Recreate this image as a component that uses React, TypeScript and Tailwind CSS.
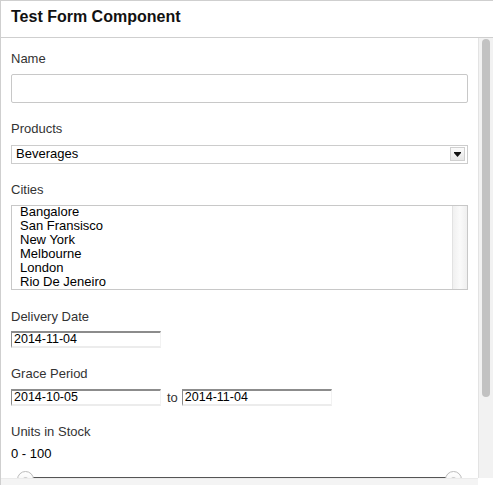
import React from "react";

const cities = [
  "Bangalore",
  "San Fransisco",
  "New York",
  "Melbourne",
  "London",
  "Rio De Jeneiro",
];

function DateBox({ value }: { value: string }) {
  return (
    <div className="w-[150px] h-[17px] border-t-2 border-l border-b-2 border-r border-t-[#8c8c8c] border-l-[#8c8c8c] border-b-[#ececec] border-r-[#f2f2f2] bg-white pl-[2px] text-[12.5px] leading-[12px] text-black">
      {value}
    </div>
  );
}

function Label({ children, className = "" }: { children: React.ReactNode; className?: string }) {
  return <div className={`text-[13px] leading-[15px] text-[#333] ${className}`}>{children}</div>;
}

export default function App() {
  return (
    <div className="w-[493px] h-[485px] overflow-hidden bg-white font-['Liberation_Sans',Arial,sans-serif]">
      <div className="w-[520px] h-[500px] border-l border-t border-[#cfcfcf] flex flex-col">
        <div className="h-[37px] shrink-0 border-b border-[#cfcfcf] px-[10px] pt-[7px]">
          <div className="text-[16px] leading-[18px] font-bold text-[#111]">Test Form Component</div>
        </div>
        <div className="flex h-[440px] shrink-0">
          <div className="w-[477px] h-[440px] overflow-hidden px-[10px] pt-[13px]">
            <Label>Name</Label>
            <div className="mt-[8px] h-[29px] border border-[#c8c8c8] rounded-[2px] bg-white" />

            <Label className="mt-[18px]">Products</Label>
            <div className="relative mt-[9px] h-[19px] border border-[#cccccc] bg-white pl-[4px] text-[13px] leading-[15px] text-black">
              Beverages
              <div className="absolute right-[2px] top-[1px] w-[15px] h-[14px] border border-[#d0d0d0] bg-gradient-to-b from-[#fbfbfb] to-[#e6e6e6] flex items-center justify-center">
                <svg width="9" height="7" viewBox="0 0 9 7">
                  <rect x="1" y="1" width="7" height="1" fill="#111" />
                  <polygon points="1,2 8,2 4.5,6" fill="#111" />
                </svg>
              </div>
            </div>

            <Label className="mt-[18px]">Cities</Label>
            <div className="mt-[8px] h-[85px] border border-[#c8c8c8] bg-white flex overflow-hidden">
              <div className="flex-1 pl-[8px] -mt-[1px] text-[13px] leading-[14px] text-black">
                {cities.map((c) => (
                  <div key={c}>{c}</div>
                ))}
              </div>
              <div className="w-[15px] border-l border-[#e2e2e2] bg-gradient-to-r from-[#f0f0f0] via-[#fafafa] to-[#efefef]" />
            </div>

            <Label className="mt-[19px]">Delivery Date</Label>
            <div className="mt-[7px]">
              <DateBox value="2014-11-04" />
            </div>

            <Label className="mt-[18px]">Grace Period</Label>
            <div className="mt-[8px] flex items-start">
              <DateBox value="2014-10-05" />
              <span className="ml-[6px] mr-[4px] text-[13px] leading-[17px] text-[#333]">to</span>
              <DateBox value="2014-11-04" />
            </div>

            <Label className="mt-[18px]">Units in Stock</Label>
            <div className="mt-[7px] text-[13px] leading-[15px] text-black">0 - 100</div>

            <div className="relative mt-[10px] mx-[6px] h-[18px]">
              <div className="absolute left-[16px] right-[16px] top-[6px] h-[1px] bg-[#555]" />
              <div className="absolute left-0 top-0 w-[17px] h-[17px] rounded-full border border-[#bbb] bg-gradient-to-b from-white to-[#eee] flex items-center justify-center">
                <div className="w-[5px] h-[5px] rounded-full bg-[#ccc]" />
              </div>
              <div className="absolute right-0 top-0 w-[17px] h-[17px] rounded-full border border-[#bbb] bg-gradient-to-b from-white to-[#eee] flex items-center justify-center">
                <div className="w-[5px] h-[5px] rounded-full bg-[#ccc]" />
              </div>
            </div>
          </div>
          <div className="w-[15px] h-[440px] border-l border-[#e3e3e3] bg-[#f2f2f2] pl-[3px] pt-[1px]">
            <div className="w-[8px] h-[358px] rounded-full bg-[#c2c2c2]" />
          </div>
        </div>
        <div className="flex h-[15px] shrink-0">
          <div className="w-[477px] bg-[#f4f4f4] border-t border-[#ebebeb]" />
          <div className="w-[15px] bg-white" />
        </div>
      </div>
    </div>
  );
}
